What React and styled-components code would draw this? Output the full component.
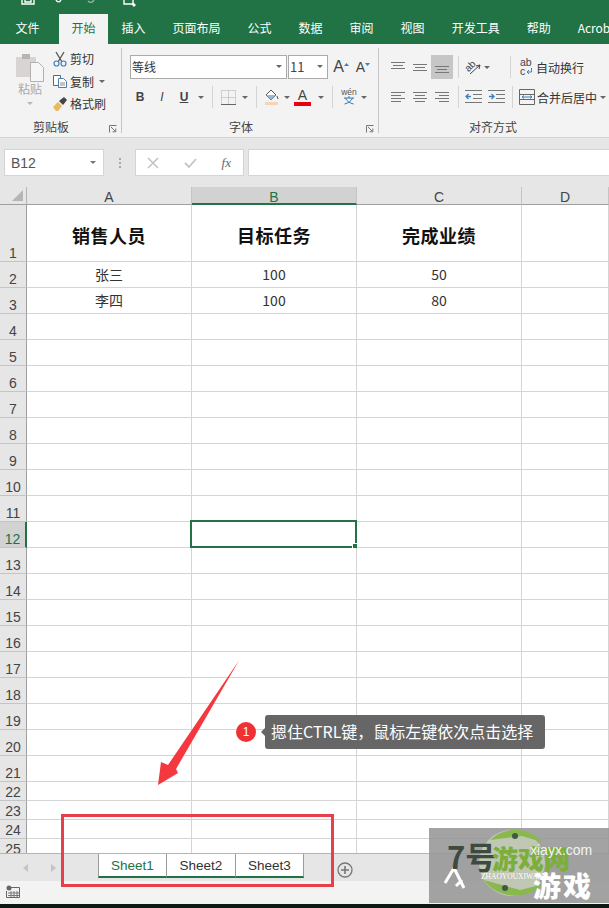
import React from 'react'
import styled, { createGlobalStyle } from 'styled-components'

const CJK = '"Noto Sans CJK SC","Liberation Sans",sans-serif'
const GREEN = '#217346'

const Global = createGlobalStyle`
  html,body{margin:0;padding:0;background:#fff;}
  body{font-family:${CJK};overflow:hidden;}
`

const Page = styled.div`
  position:relative;
  width:609px;
  height:908px;
  overflow:hidden;
  display:flex;
  flex-direction:column;
  background:#fff;
`

const TitleBar = styled.div`
  height:14px;
  background:${GREEN};
  flex:none;
  display:flex;
  align-items:flex-end;
  overflow:hidden;
`
const TitleIcon = styled.svg`
  width:16px;
  height:14px;
  margin-left:${(p) => p.$ml}px;
  flex:none;
`

const TabRow = styled.div`
  height:30px;
  background:${GREEN};
  flex:none;
  display:flex;
  padding-left:2px;
  overflow:hidden;
`
const Tab = styled.div`
  padding:0 ${(p) => (p.$active ? 12.5 : 13.5)}px;
  height:30px;
  line-height:28px;
  font-size:12px;
  white-space:nowrap;
  color:${(p) => (p.$active ? GREEN : '#fff')};
  background:${(p) => (p.$active ? '#f3f3f3' : 'transparent')};
  margin-right:${(p) => p.$mr || 0}px;
`

const Ribbon = styled.div`
  height:94px;
  flex:none;
  display:flex;
  background:#f3f3f3;
  border-bottom:1px solid #d2d2d2;
  box-sizing:border-box;
  overflow:hidden;
`
const Group = styled.div`
  position:relative;
  width:${(p) => p.$w}px;
  flex:none;
  display:flex;
  flex-direction:column;
  box-sizing:border-box;
  padding-left:${(p) => p.$pl || 0}px;
`
const GroupEdge = styled.div`
  position:absolute;
  right:0;
  top:4px;
  bottom:4px;
  width:1px;
  background:#c6c6c6;
`
const GroupBody = styled.div`
  flex:1;
  display:flex;
  min-height:0;
`
const GroupLabel = styled.div`
  position:absolute;
  left:${(p) => p.$x}px;
  bottom:2px;
  font-size:12px;
  line-height:16px;
  color:#444;
  white-space:nowrap;
`
const Launcher = styled.svg`
  position:absolute;
  right:5px;
  bottom:4px;
  width:8px;
  height:8px;
`
const PasteCol = styled.div`
  width:38px;
  margin-left:11px;
  padding-top:8px;
  display:flex;
  flex-direction:column;
  align-items:center;
  font-size:12px;
  color:#a9a9a9;
  line-height:14px;
`
const PasteCaret = styled.div`
  margin-top:6px;
  border-left:3px solid transparent;
  border-right:3px solid transparent;
  border-top:3px solid #b8b8b8;
`
const SmallCol = styled.div`
  margin-left:3px;
  padding-top:4px;
  display:flex;
  flex-direction:column;
  gap:1.5px;
`
const SmallRow = styled.div`
  height:21px;
  display:flex;
  align-items:center;
  gap:2px;
  font-size:12px;
  color:#333;
  white-space:nowrap;
`
const Column = styled.div`
  display:flex;
  flex-direction:column;
  padding-top:${(p) => p.$pt || 0}px;
`
const Row = styled.div`
  display:flex;
  align-items:center;
  height:${(p) => p.$h || 24}px;
  margin-top:${(p) => p.$mt || 0}px;
  margin-left:${(p) => p.$ml || 0}px;
`
const Select = styled.div`
  box-sizing:border-box;
  width:${(p) => p.$w}px;
  height:24px;
  background:#fff;
  border:1px solid #ababab;
  margin-right:1px;
  display:flex;
  align-items:center;
  justify-content:space-between;
  padding:0 3px 2px 1px;
  font-size:12px;
  color:#333;
`
const Tool = styled.div`
  width:${(p) => p.$w || 22}px;
  height:${(p) => p.$h || 22}px;
  flex:none;
  display:flex;
  align-items:center;
  justify-content:center;
  background:${(p) => (p.$on ? '#c6c6c6' : 'transparent')};
  font-family:"Liberation Sans",sans-serif;
  color:#444;
  margin-left:${(p) => p.$ml || 0}px;
`
const Caret = styled.div`
  width:${(p) => p.$w || 12}px;
  flex:none;
  display:flex;
  justify-content:center;
  margin-left:${(p) => p.$ml || 0}px;
  &::after{
    content:'';
    border-left:3px solid transparent;
    border-right:3px solid transparent;
    border-top:3px solid ${(p) => p.$c || '#666'};
  }
`
const Sep = styled.div`
  width:1px;
  height:${(p) => p.$h || 22}px;
  background:#d4d4d4;
  flex:none;
  margin:0 ${(p) => p.$r ?? 4}px 0 ${(p) => p.$l ?? 5}px;
`
const Letter = styled.span`
  font-size:${(p) => p.$s || 12}px;
  font-weight:${(p) => (p.$b ? 700 : 400)};
  font-style:${(p) => (p.$i ? 'italic' : 'normal')};
  text-decoration:${(p) => (p.$u ? 'underline' : 'none')};
  color:#444;
`
const ToolText = styled.span`
  font-size:12px;
  color:#333;
  white-space:nowrap;
  margin-left:${(p) => p.$ml || 0}px;
`

const FormulaBar = styled.div`
  height:49px;
  flex:none;
  box-sizing:border-box;
  background:#e6e6e6;
  padding:11px 0 0 4px;
  display:flex;
  align-items:flex-start;
`
const NameBox = styled.div`
  box-sizing:border-box;
  width:100px;
  height:27px;
  background:#fff;
  border:1px solid #d4d4d4;
  display:flex;
  align-items:center;
  justify-content:space-between;
  padding:0 6px;
  font-family:"Liberation Sans",sans-serif;
  font-size:14px;
  color:#555;
`
const Dots = styled.div`
  width:31px;
  height:27px;
  display:flex;
  flex-direction:column;
  align-items:center;
  justify-content:center;
  gap:2px;
  i{width:2px;height:2px;background:#a8a8a8;display:block;}
`
const FxBox = styled.div`
  box-sizing:border-box;
  width:109px;
  height:27px;
  background:#fff;
  border:1px solid #d4d4d4;
  display:flex;
  align-items:center;
  justify-content:space-between;
  padding:0 12px 0 11px;
`
const FxText = styled.span`
  font-family:"Liberation Serif",serif;
  font-style:italic;
  font-size:13px;
  color:#666;
`
const FormulaInput = styled.div`
  box-sizing:border-box;
  flex:1;
  height:27px;
  margin-left:4px;
  background:#fff;
  border:1px solid #d4d4d4;
  border-right:0;
`

const Sheet = styled.div`
  flex:1;
  min-height:0;
  overflow:hidden;
  display:grid;
  grid-template-columns:27px 165px 165px 165px 1fr;
  grid-auto-rows:min-content;
`
const Corner = styled.div`
  height:17px;
  background:#e6e6e6;
  border-bottom:1px solid #9f9f9f;
  border-right:1px solid #b4b4b4;
  box-sizing:content-box;
  width:26px;
  position:relative;
  &::after{
    content:'';
    position:absolute;
    right:3px;
    bottom:3px;
    border-left:11px solid transparent;
    border-bottom:11px solid #b5b5b5;
  }
`
const ColHead = styled.div`
  height:${(p) => (p.$on ? 16 : 17)}px;
  background:${(p) => (p.$on ? '#d2d2d2' : '#e6e6e6')};
  border-bottom:${(p) => (p.$on ? `2px solid ${GREEN}` : '1px solid #9f9f9f')};
  border-right:1px solid #c4c4c4;
  font-family:"Liberation Sans",sans-serif;
  font-size:14px;
  line-height:20px;
  text-align:center;
  color:${(p) => (p.$on ? GREEN : '#444')};
  overflow:hidden;
`
const RowHead = styled.div`
  box-sizing:border-box;
  height:${(p) => p.$h}px;
  background:${(p) => (p.$on ? '#d2d2d2' : '#e6e6e6')};
  border-right:${(p) => (p.$on ? `2px solid ${GREEN}` : '1px solid #9f9f9f')};
  border-bottom:1px solid #c4c4c4;
  font-family:"Liberation Sans",sans-serif;
  font-size:14px;
  line-height:15px;
  display:flex;
  align-items:flex-end;
  justify-content:center;
  color:${(p) => (p.$on ? GREEN : '#444')};
`
const Cell = styled.div`
  box-sizing:border-box;
  position:relative;
  height:${(p) => p.$h}px;
  border-right:1px solid #d4d4d4;
  border-bottom:1px solid #d4d4d4;
  display:flex;
  align-items:center;
  justify-content:center;
  padding:${(p) => (p.$title ? '3px 0 0' : '0 0 2px')};
  font-size:${(p) => (p.$title ? 18 : 14)}px;
  font-weight:${(p) => (p.$title ? 700 : 400)};
  letter-spacing:${(p) => (p.$title ? '0.5px' : 0)};
  color:${(p) => (p.$title ? '#111' : '#333')};
`
const Selection = styled.div`
  position:absolute;
  left:-2px;
  top:-2px;
  right:-1px;
  bottom:-1px;
  border:2px solid ${GREEN};
  &::after{
    content:'';
    position:absolute;
    right:-3px;
    bottom:-3px;
    width:6px;
    height:6px;
    background:${GREEN};
    border:1px solid #fff;
    box-sizing:border-box;
  }
`

const SheetTabs = styled.div`
  height:28px;
  flex:none;
  box-sizing:border-box;
  background:#e6e6e6;
  border-top:1px solid #b4b4b4;
  display:flex;
`
const NavArrow = styled.div`
  width:0;
  height:0;
  margin:10px 0 0 ${(p) => p.$ml}px;
  border-top:4px solid transparent;
  border-bottom:4px solid transparent;
  ${(p) => (p.$left ? 'border-right:5px solid #c4c4c4;' : 'border-left:5px solid #c4c4c4;')}
`
const SheetTab = styled.div`
  box-sizing:border-box;
  width:${(p) => p.$w || 69}px;
  height:24px;
  background:#fff;
  border-bottom:2px solid ${GREEN};
  border-right:1px solid #9a9a9a;
  border-left:${(p) => (p.$first ? '1px solid #9a9a9a' : '0')};
  margin-left:${(p) => p.$ml || 0}px;
  font-family:"Liberation Sans",sans-serif;
  font-size:13.5px;
  line-height:23px;
  text-align:center;
  color:${(p) => (p.$on ? GREEN : '#333')};
`
const AddSheet = styled.div`
  margin:5px 0 0 33px;
  width:16px;
  height:16px;
`
const StatusBar = styled.div`
  height:23px;
  flex:none;
  background:#f3f3f3;
  padding:4px 0 0 6px;
  box-sizing:border-box;
  display:flex;
  align-items:flex-start;
`
const BottomEdge = styled.div`
  height:4px;
  flex:none;
  background:#0c1a14;
`

const RedFrame = styled.div`
  position:absolute;
  left:61px;
  top:814px;
  width:273px;
  height:73px;
  box-sizing:border-box;
  border:3px solid #e8404a;
`
const ArrowMark = styled.svg`
  position:absolute;
  left:150px;
  top:655px;
  width:95px;
  height:135px;
`
const Badge = styled.div`
  position:absolute;
  left:236px;
  top:722px;
  width:20px;
  height:20px;
  border-radius:50%;
  background:#f03035;
  color:#fff;
  font-family:"Liberation Sans",sans-serif;
  font-size:12px;
  line-height:20px;
  text-align:center;
`
const Hint = styled.div`
  position:absolute;
  left:265px;
  top:715px;
  height:34px;
  padding:0 12px 0 6px;
  border-radius:3px;
  background:#666;
  color:#fff;
  font-size:16px;
  line-height:33px;
  white-space:nowrap;
  &::before{
    content:'';
    position:absolute;
    left:-4px;
    top:13px;
    border-top:4px solid transparent;
    border-bottom:4px solid transparent;
    border-right:4px solid #666;
  }
`

const Watermark = styled.div`
  position:absolute;
  left:429px;
  top:828px;
  width:180px;
  height:75px;
  background:rgba(150,150,150,.88);
  overflow:hidden;
`
const MarkLogo = styled.svg`
  position:absolute;
  left:0;
  top:0;
  width:180px;
  height:75px;
`
const MarkSeven = styled.div`
  position:absolute;
  left:18px;
  top:10px;
  font-size:31px;
  line-height:36px;
  font-weight:700;
  color:#3d4a40;
  white-space:nowrap;
`
const MarkName = styled.div`
  position:absolute;
  left:63px;
  top:15px;
  font-size:26px;
  line-height:30px;
  font-weight:900;
  color:#7cae3c;
  white-space:nowrap;
`
const MarkDomain = styled.div`
  position:absolute;
  left:101px;
  top:13px;
  font-family:"Liberation Sans",sans-serif;
  font-size:14px;
  line-height:18px;
  color:#f4f4f4;
  white-space:nowrap;
`
const MarkPinyin = styled.div`
  position:absolute;
  left:52px;
  top:44px;
  font-family:"Liberation Serif",serif;
  font-size:7.5px;
  line-height:10px;
  color:#fff;
  white-space:nowrap;
`
const MarkGame = styled.div`
  position:absolute;
  left:104px;
  top:41px;
  font-size:28px;
  line-height:32px;
  font-weight:900;
  letter-spacing:2px;
  color:#fff;
  white-space:nowrap;
`

const LineSet = ({ rows, w = 16, c = '#777' }) => (
  <svg width={w} height="14" viewBox={`0 0 ${w} 14`}>
    {rows.map(([x1, x2, y], i) => (
      <line key={i} x1={x1} x2={x2} y1={y + 0.5} y2={y + 0.5} stroke={c} />
    ))}
  </svg>
)

const LauncherIcon = () => (
  <Launcher viewBox="0 0 8 8">
    <path d="M.5 7.500V.5h7M2 2l4.500 4.500M3.500 6.800h3.300V3.500" fill="none" stroke="#777" />
  </Launcher>
)

const ROWS = [...Array(25)].map((_, i) => i + 1)
const rowHeight = (n) => (n === 1 ? 57 : n > 21 ? 19 : 26)

const DATA = {
  1: ['销售人员', '目标任务', '完成业绩'],
  2: ['张三', '100', '50'],
  3: ['李四', '100', '80'],
}

const TABS = ['插入', '页面布局', '公式', '数据', '审阅', '视图', '开发工具', '帮助', 'Acrobat']

const App = () => {
  return (
    <Page>
      <Global />
      <TitleBar>
        <TitleIcon $ml={20} viewBox="0 0 16 14">
          <path d="M2 0v4h12V0M5 0v2h6V0" fill="none" stroke="#fff" strokeWidth="1.4" />
        </TitleIcon>
        <TitleIcon $ml={17} viewBox="0 0 16 14">
          <path d="M3 0c1 2 3 3 5 0" fill="none" stroke="#fff" strokeWidth="1.4" />
        </TitleIcon>
        <TitleIcon $ml={12} viewBox="0 0 16 14">
          <path d="M13 0c-2 3-4 3-6 1" fill="none" stroke="#8fb8a3" strokeWidth="1.4" />
        </TitleIcon>
        <TitleIcon $ml={25} viewBox="0 0 16 14">
          <path d="M2 0v4h8l2 2 1-1-2-2V0" fill="none" stroke="#fff" strokeWidth="1.4" />
        </TitleIcon>
      </TitleBar>

      <TabRow>
        <Tab $mr={6}>文件</Tab>
        <Tab $active>开始</Tab>
        {TABS.map((t) => (
          <Tab key={t}>{t}</Tab>
        ))}
      </TabRow>

      <Ribbon>
        <Group $w={122}>
          <GroupBody>
            <PasteCol>
              <svg width="30" height="30" viewBox="0 0 30 30">
                <path d="M1 5h20v20H1z" fill="#d8d4d4" />
                <path d="M7 2h8v5H7z" fill="#b8b4b4" />
                <path d="M15.500 10.500h8l5 5v14h-13z" fill="#f6f6f6" stroke="#b0b0b0" />
              </svg>
              <span>粘贴</span>
              <PasteCaret />
            </PasteCol>
            <SmallCol>
              <SmallRow>
                <svg width="16" height="16" viewBox="0 0 16 16">
                  <path d="M4 1l6 10M12 1L6 11" stroke="#555" strokeWidth="1.3" fill="none" />
                  <circle cx="4.500" cy="12.500" r="2.500" fill="none" stroke="#3f7fbf" strokeWidth="1.200" />
                  <circle cx="11.500" cy="12.500" r="2.500" fill="none" stroke="#3f7fbf" strokeWidth="1.200" />
                </svg>
                剪切
              </SmallRow>
              <SmallRow>
                <svg width="16" height="16" viewBox="0 0 16 16">
                  <path d="M1.500 2.500h7v10h-7z" fill="#fff" stroke="#666" />
                  <path d="M6.500 5.500h5l3 3v6h-8z" fill="#fff" stroke="#4a7fae" />
                  <path d="M8 10h5M8 12h5" stroke="#888" />
                </svg>
                复制
                <Caret />
              </SmallRow>
              <SmallRow>
                <svg width="16" height="16" viewBox="0 0 16 16">
                  <path d="M1 11l5-5 4 4-4 5H4z" fill="#e9b95c" />
                  <path d="M7 5l5-4 3 3-4 5z" fill="#444" />
                </svg>
                格式刷
              </SmallRow>
            </SmallCol>
          </GroupBody>
          <GroupLabel $x={33}>剪贴板</GroupLabel>
          <LauncherIcon />
          <GroupEdge />
        </Group>

        <Group $w={257} $pl={7}>
          <Column $pt={11}>
            <Row $ml={1}>
              <Select $w={157}>
                等线
                <Caret $w={8} />
              </Select>
              <Select $w={40}>
                <Letter $s={13}>11</Letter>
                <Caret $w={8} />
              </Select>
              <Tool $w={22} $ml={1}>
                <Letter $s={16}>A</Letter>
                <svg width="5" height="10" viewBox="0 0 5 10"><path d="M0 4l2.500-3L5 4z" fill="#3f7fbf" /></svg>
              </Tool>
              <Tool $w={22}>
                <Letter $s={14}>A</Letter>
                <svg width="5" height="10" viewBox="0 0 5 10"><path d="M0 1h5L2.500 4z" fill="#3f7fbf" /></svg>
              </Tool>
            </Row>
            <Row $mt={7} $h={22}>
              <Tool><Letter $b>B</Letter></Tool>
              <Tool><Letter $i>I</Letter></Tool>
              <Tool><Letter $u $b>U</Letter></Tool>
              <Caret />
              <Sep />
              <Tool>
                <svg width="15" height="15" viewBox="0 0 15 15">
                  <path d="M.5.500h14v14H.5zM7.500.5v14M.5 7.500h14" fill="none" stroke="#aaa" strokeDasharray="1 1" />
                  <path d="M0 14.500h15" stroke="#666" />
                </svg>
              </Tool>
              <Caret />
              <Sep />
              <Tool>
                <svg width="18" height="18" viewBox="0 0 18 18">
                  <path d="M3 7l5-5 5 5-5 5z" fill="#fff" stroke="#555" />
                  <path d="M3 7h10l-5 5z" fill="#9ab8d6" />
                  <path d="M14 8l1 3" stroke="#555" fill="none" />
                  <path d="M2 14h13v3H2z" fill="#f8d3b4" />
                </svg>
              </Tool>
              <Caret $w={8} />
              <Tool>
                <svg width="17" height="18" viewBox="0 0 17 18">
                  <text x="8.500" y="12" textAnchor="middle" fontSize="14" fontFamily="Liberation Sans" fill="#444">A</text>
                  <path d="M0 14h17v4H0z" fill="#e60012" />
                </svg>
              </Tool>
              <Caret $ml={2} />
              <Sep $r={5} />
              <Tool>
                <svg width="20" height="20" viewBox="0 0 20 20">
                  <text x="10" y="8" textAnchor="middle" fontSize="8.500" fontFamily="Liberation Sans" fill="#555">wén</text>
                  <path d="M5 11h10M10 9v2M6.500 11c1 3 4 5 8 6M13.500 11c-1 3-4 5-8 6" stroke="#2f78b5" fill="none" />
                </svg>
              </Tool>
              <Caret $ml={-2} />
            </Row>
          </Column>
          <GroupLabel $x={107}>字体</GroupLabel>
          <LauncherIcon />
          <GroupEdge />
        </Group>

        <Group $w={230} $pl={8}>
          <Column $pt={11}>
            <Row>
              <Tool $h={24}><LineSet rows={[[1, 15, 2], [3, 13, 5], [1, 15, 8]]} /></Tool>
              <Tool $h={24}><LineSet rows={[[1, 15, 4], [3, 13, 7], [1, 15, 10]]} /></Tool>
              <Tool $h={24} $on><LineSet rows={[[1, 15, 6], [3, 13, 9], [1, 15, 12]]} /></Tool>
              <Sep $l={5} $r={4} />
              <Tool $w={20}>
                <svg width="18" height="18" viewBox="0 0 18 18">
                  <text x="7" y="11" transform="rotate(-45 7 9)" textAnchor="middle" fontSize="10" fontFamily="Liberation Sans" fill="#444">ab</text>
                  <path d="M6 16L16 7M16 7l-4 1M16 7l-1 4" stroke="#444" fill="none" />
                </svg>
              </Tool>
              <Caret $w={8} />
              <Sep $l={19} $r={4} />
              <Tool $w={21}>
                <svg width="14" height="20" viewBox="0 0 14 20">
                  <text x="1" y="9" fontSize="10.500" fontFamily="Liberation Sans" fill="#444">ab</text>
                  <text x="1" y="18" fontSize="10.500" fontFamily="Liberation Sans" fill="#444">c</text>
                  <path d="M12.500 11v4H8M10 13l-2 2 2 2" stroke="#3f7fbf" fill="none" />
                </svg>
              </Tool>
              <ToolText>自动换行</ToolText>
            </Row>
            <Row $mt={7} $h={22}>
              <Tool><LineSet rows={[[1, 15, 2], [1, 11, 5], [1, 15, 8], [1, 11, 11]]} /></Tool>
              <Tool><LineSet rows={[[1, 15, 2], [3, 13, 5], [1, 15, 8], [3, 13, 11]]} /></Tool>
              <Tool><LineSet rows={[[1, 15, 2], [5, 15, 5], [1, 15, 8], [5, 15, 11]]} /></Tool>
              <Sep $l={5} $r={3} />
              <Tool $w={23}>
                <svg width="17" height="14" viewBox="0 0 17 14">
                  <path d="M0 .5h17M8 4.500h9M8 8.500h9M0 12.500h17" stroke="#777" />
                  <path d="M6 6.500H1M3.500 4L1 6.500 3.500 9" stroke="#3f7fbf" strokeWidth="1.300" fill="none" />
                </svg>
              </Tool>
              <Tool $w={23}>
                <svg width="17" height="14" viewBox="0 0 17 14">
                  <path d="M0 .5h17M8 4.500h9M8 8.500h9M0 12.500h17" stroke="#777" />
                  <path d="M1 6.500h5M3.500 4L6 6.500 3.500 9" stroke="#3f7fbf" strokeWidth="1.300" fill="none" />
                </svg>
              </Tool>
              <Sep $l={4} $r={4} />
              <Tool $w={20}>
                <svg width="16" height="16" viewBox="0 0 16 16">
                  <path d="M.5.500h15v15H.5zM.5 5.500h15M.5 10.500h15" fill="none" stroke="#666" />
                  <path d="M3 8h10M5 6.500L3 8l2 1.500M11 6.500L13 8l-2 1.500" stroke="#3f7fbf" fill="none" />
                </svg>
              </Tool>
              <ToolText>合并后居中</ToolText>
              <Caret />
            </Row>
          </Column>
          <GroupLabel $x={90}>对齐方式</GroupLabel>
        </Group>
      </Ribbon>

      <FormulaBar>
        <NameBox>
          B12
          <Caret $w={8} $c="#777" />
        </NameBox>
        <Dots><i /><i /><i /></Dots>
        <FxBox>
          <svg width="12" height="12" viewBox="0 0 12 12">
            <path d="M1 1l10 10M11 1L1 11" stroke="#c4c4c4" strokeWidth="1.600" />
          </svg>
          <svg width="13" height="12" viewBox="0 0 13 12">
            <path d="M1 6l4 4 7-8" stroke="#c4c4c4" strokeWidth="1.800" fill="none" />
          </svg>
          <FxText>fx</FxText>
        </FxBox>
        <FormulaInput />
      </FormulaBar>

      <Sheet>
        <Corner />
        <ColHead>A</ColHead>
        <ColHead $on>B</ColHead>
        <ColHead>C</ColHead>
        <ColHead>D</ColHead>
        {ROWS.map((n) => {
          const h = rowHeight(n)
          const vals = DATA[n] || ['', '', '']
          return (
            <React.Fragment key={n}>
              <RowHead $h={h} $on={n === 12}>{n}</RowHead>
              <Cell $h={h} $title={n === 1}>{vals[0]}</Cell>
              <Cell $h={h} $title={n === 1}>
                {vals[1]}
                {n === 12 && <Selection />}
              </Cell>
              <Cell $h={h} $title={n === 1}>{vals[2]}</Cell>
              <Cell $h={h} />
            </React.Fragment>
          )
        })}
      </Sheet>

      <SheetTabs>
        <NavArrow $left $ml={23} />
        <NavArrow $ml={23} />
        <SheetTab $first $on $w={69} $ml={42}>Sheet1</SheetTab>
        <SheetTab>Sheet2</SheetTab>
        <SheetTab $w={68}>Sheet3</SheetTab>
        <AddSheet>
          <svg width="16" height="16" viewBox="0 0 16 16">
            <circle cx="8" cy="8" r="7" fill="none" stroke="#777" strokeWidth="1.300" />
            <path d="M4 8h8M8 4v8" stroke="#777" strokeWidth="1.600" />
          </svg>
        </AddSheet>
      </SheetTabs>
      <StatusBar>
        <svg width="14" height="13" viewBox="0 0 14 13">
          <circle cx="3" cy="3" r="2.500" fill="#666" />
          <path d="M5 2.500h8.500v10H.5V6" fill="none" stroke="#666" />
          <path d="M2 8h11M2 10.500h11M5 6v6M8 6v6M11 6v6" stroke="#777" />
        </svg>
      </StatusBar>
      <BottomEdge />

      <ArrowMark viewBox="150 655 95 135">
        <path d="M239.300 660L176 769l2 4-20 12 3-23 7 3z" fill="#f5383f" />
      </ArrowMark>
      <RedFrame />
      <Badge>1</Badge>
      <Hint>摁住CTRL键，鼠标左键依次点击选择</Hint>

      <Watermark>
        <MarkLogo viewBox="0 0 180 75">
          <circle cx="83" cy="35" r="33" fill="#d8e6c4" opacity=".55" />
          <path d="M61 12C76-2 99-2 113 14L93 8z" fill="#8ab84e" />
          <path d="M55 52c12 18 42 22 60 4L91 62z" fill="#8ab84e" />
          <circle cx="86" cy="8" r="3" fill="#3d5a40" />
          <circle cx="76" cy="60" r="3" fill="#3d5a40" />
          <path d="M16 55l9-15M25 40l10 20M27 58l6-6" stroke="#fff" strokeWidth="3" fill="none" />
        </MarkLogo>
        <MarkSeven>7号</MarkSeven>
        <MarkName>游戏网</MarkName>
        <MarkDomain>xiayx.com</MarkDomain>
        <MarkPinyin>ZHAOYOUXIWANG</MarkPinyin>
        <MarkGame>游戏</MarkGame>
      </Watermark>
    </Page>
  )
}

export default App
